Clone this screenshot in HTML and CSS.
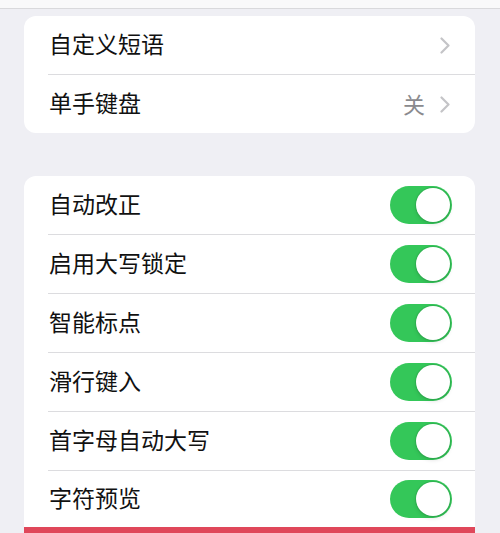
FILE: index.html
```html
<html>
    <head>
        <meta charset="utf-8">
        <link rel="stylesheet" href="styles.css">
        <title>键盘</title>
    </head>
    <body>
        <div class="topbar"></div>

        <div class="group first">
            <div class="row">
                <span class="label">自定义短语</span>
                <span class="detail">
                    <svg class="chevron" width="10" height="17" viewBox="0 0 10 17"><polyline points="1.5,1.5 8.5,8.5 1.5,15.5"/></svg>
                </span>
            </div>
            <div class="row">
                <span class="label">单手键盘</span>
                <span class="detail">
                    <span class="value">关</span>
                    <svg class="chevron" width="10" height="17" viewBox="0 0 10 17"><polyline points="1.5,1.5 8.5,8.5 1.5,15.5"/></svg>
                </span>
            </div>
        </div>

        <div class="group second">
            <div class="row">
                <span class="label">自动改正</span>
                <span class="switch on"><span class="knob"></span></span>
            </div>
            <div class="row">
                <span class="label">启用大写锁定</span>
                <span class="switch on"><span class="knob"></span></span>
            </div>
            <div class="row">
                <span class="label">智能标点</span>
                <span class="switch on"><span class="knob"></span></span>
            </div>
            <div class="row">
                <span class="label">滑行键入</span>
                <span class="switch on"><span class="knob"></span></span>
            </div>
            <div class="row">
                <span class="label">首字母自动大写</span>
                <span class="switch on"><span class="knob"></span></span>
            </div>
            <div class="row short">
                <span class="label">字符预览</span>
                <span class="switch on"><span class="knob"></span></span>
            </div>
            <div class="marked"></div>
        </div>
    </body>
</html>
```

FILE: styles.css
```css
body {
    margin: 0;
    background-color: #efeff4;
    font-family: "Noto Sans CJK SC", "Noto Sans", sans-serif;
    color: #111;
    overflow: hidden;
}
.topbar {
    height: 8px;
    background-color: #f9f9fa;
    border-bottom: 1px solid #d9d9dc;
}
.group {
    margin: 0 25px 0 24px;
    background-color: #fff;
    border-radius: 12px;
    padding-left: 24px;
    overflow: hidden;
}
.group.first {
    margin-top: 7px;
}
.group.second {
    margin-top: 43px;
}
.row {
    height: 58px;
    display: flex;
    align-items: center;
    justify-content: space-between;
    padding-right: 23px;
}
.row + .row {
    border-top: 1px solid #dcdcdf;
}
.row.short {
    height: 56px;
}
.label {
    font-size: 23px;
    line-height: 1;
    margin-left: 1px;
    padding-bottom: 3px;
}
.detail {
    display: flex;
    align-items: center;
    gap: 15px;
    padding-right: 2px;
}
.value {
    font-size: 22px;
    line-height: 1;
    color: #8a8a8e;
    padding-bottom: 3px;
}
.chevron polyline {
    fill: none;
    stroke: #c4c4c7;
    stroke-width: 2.2;
    stroke-linecap: round;
    stroke-linejoin: round;
}
.switch {
    width: 62px;
    height: 38px;
    border-radius: 19px;
    background-color: #34c759;
    display: flex;
    align-items: center;
    justify-content: flex-end;
    padding: 0 2px;
    box-sizing: border-box;
}
.knob {
    width: 34px;
    height: 34px;
    border-radius: 50%;
    background-color: #fff;
    box-shadow: 0 0 0 1px rgba(40, 150, 70, 0.35), 0 2px 4px rgba(0, 0, 0, 0.12);
}
.marked {
    height: 20px;
    margin-left: -24px;
    background-color: #e0475a;
}
```
